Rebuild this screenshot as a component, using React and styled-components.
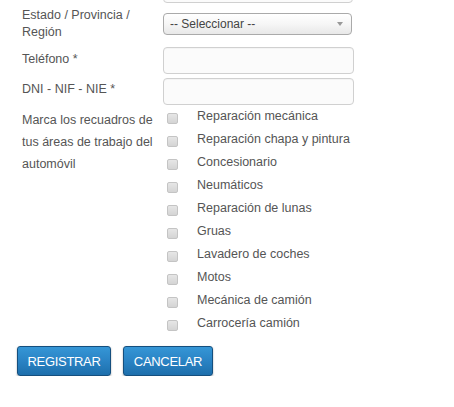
import React from "react";
import styled, { createGlobalStyle } from "styled-components";

const Global = createGlobalStyle`
  html, body { margin: 0; padding: 0; background: #fff; }
  body { font-family: "Liberation Sans", Arial, sans-serif; color: #555; }
`;

const Form = styled.form`
  display: flex;
  flex-direction: column;
  margin-top: -24px;
  padding-left: 22px;
  width: 332px;
`;

const Row = styled.div`
  display: grid;
  grid-template-columns: 141px 190px;
  align-items: ${(p) => p.$align || "center"};
  margin-bottom: ${(p) => p.$mb ?? 4}px;
`;

const Label = styled.label`
  font-size: 12.5px;
  line-height: ${(p) => p.$lh || 17}px;
  color: #555;
  padding-right: 4px;
  margin-top: ${(p) => p.$mt || 0}px;
`;

const Input = styled.input`
  box-sizing: border-box;
  height: 27px;
  width: ${(p) => p.$w || 191}px;
  border: 1px solid #d0d0d0;
  border-radius: 4px;
  background: #fbfbfb;
  box-shadow: inset 0 1px 1px rgba(0,0,0,0.03);
  outline: none;
`;

const Select = styled.div`
  box-sizing: border-box;
  height: 22px;
  width: 189px;
  border: 1px solid #aaa;
  border-radius: 4px;
  background: linear-gradient(#ffffff 0%, #f6f6f6 50%, #e8e8e8 100%);
  display: flex;
  align-items: center;
  justify-content: space-between;
  padding: 0 8px 0 6px;
  font-size: 12px;
  color: #444;
`;

const Arrow = styled.span`
  width: 0;
  height: 0;
  border-left: 3px solid transparent;
  border-right: 3px solid transparent;
  border-top: 4px solid #999;
`;

const CheckList = styled.div`
  display: flex;
  flex-direction: column;
  margin-top: -5px;
`;

const CheckRow = styled.label`
  display: flex;
  align-items: flex-start;
  height: 23px;
  font-size: 12.5px;
  color: #555;
  white-space: nowrap;
`;

const Box = styled.span`
  box-sizing: border-box;
  width: 11px;
  height: 11px;
  margin: 7px 19px 0 4px;
  border: 1px solid #c4c4c4;
  border-radius: 2px;
  background: linear-gradient(#e6e6e6, #d4d4d4);
  flex: none;
`;

const CheckText = styled.span`
  line-height: 17px;
  margin-top: 2px;
`;

const Buttons = styled.div`
  display: flex;
  gap: 12px;
  margin-left: -5px;
  margin-top: 10px;
`;

const Button = styled.button`
  box-sizing: border-box;
  height: 30px;
  width: ${(p) => p.$w}px;
  border: 1px solid #154f7e;
  border-radius: 3px;
  background: linear-gradient(#3596d6 0%, #2a83c4 50%, #1d6fac 100%);
  box-shadow: 0 1px 2px rgba(0,0,0,0.35);
  color: #fff;
  font-family: "Liberation Sans", Arial, sans-serif;
  font-size: 13px;
  letter-spacing: -0.3px;
  padding: 0;
  cursor: pointer;
`;

const areas = [
  "Reparación mecánica",
  "Reparación chapa y pintura",
  "Concesionario",
  "Neumáticos",
  "Reparación de lunas",
  "Gruas",
  "Lavadero de coches",
  "Motos",
  "Mecánica de camión",
  "Carrocería camión",
];

export default function App() {
  return (
    <>
      <Global />
      <Form>
        <Row $mb={4}>
          <span />
          <Input $w={190} />
        </Row>
        <Row $mb={6}>
          <Label>Estado / Provincia / Región</Label>
          <Select>
            <span>-- Seleccionar --</span>
            <Arrow />
          </Select>
        </Row>
        <Row $mb={4}>
          <Label $mt={-3}>Teléfono *</Label>
          <Input />
        </Row>
        <Row $mb={6}>
          <Label $mt={-4}>DNI - NIF - NIE *</Label>
          <Input />
        </Row>
        <Row $align="start" $mb={0}>
          <Label $lh={22} $mt={-2}>Marca los recuadros de tus áreas de trabajo del automóvil</Label>
          <CheckList>
            {areas.map((a) => (
              <CheckRow key={a}>
                <Box />
                <CheckText>{a}</CheckText>
              </CheckRow>
            ))}
          </CheckList>
        </Row>
        <Buttons>
          <Button type="button" $w={94}>REGISTRAR</Button>
          <Button type="button" $w={90}>CANCELAR</Button>
        </Buttons>
      </Form>
    </>
  );
}
